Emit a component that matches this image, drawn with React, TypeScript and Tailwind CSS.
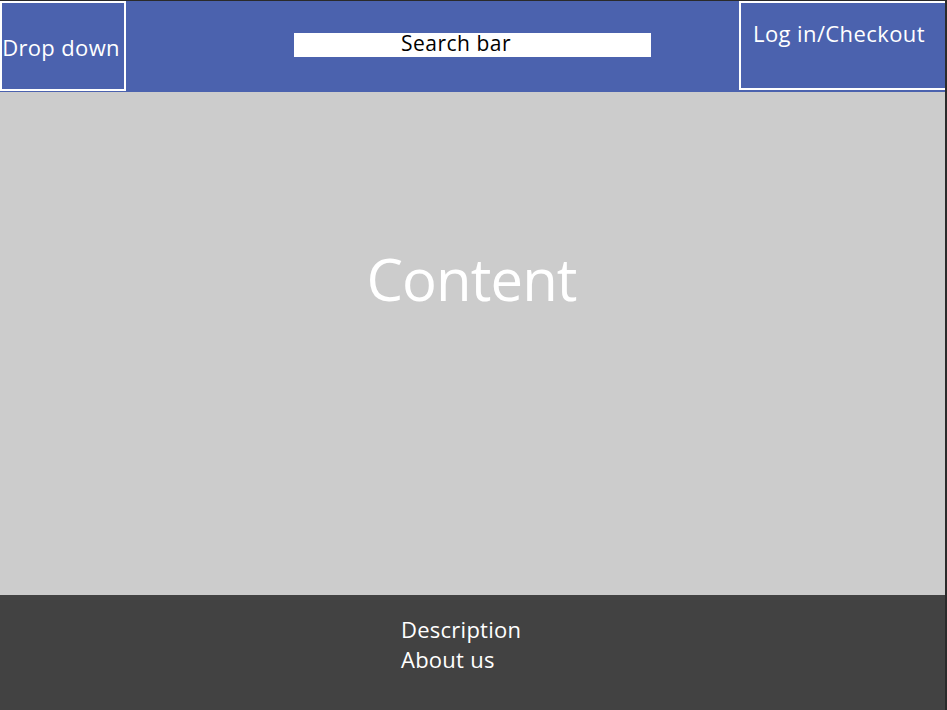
import React from "react";

export default function App() {
  return (
    <div
      className="w-[947px] h-[710px] overflow-hidden flex bg-[#2a2a2a]"
      style={{ fontFamily: '"Open Sans", "Noto Sans", sans-serif' }}
    >
      <div className="w-[945px] h-[710px] flex flex-col">
        <header className="h-[92px] bg-[#4b62ae] border-t border-[#2a2a2a] flex items-stretch">
          <div className="w-[126px] h-[90px] border-2 border-white flex items-center justify-center pt-[2px] pr-[4px] text-white text-[22px] tracking-[0.35px]">
            Drop down
          </div>
          <div className="flex-1 flex items-start pl-[168px] pt-[32px]">
            <div className="w-[357px] h-[24px] bg-white flex items-center pl-[107px] pb-[3px] text-black text-[21px] leading-none tracking-[0.5px]">
              Search bar
            </div>
          </div>
          <div className="w-[206px] h-[89px] border-2 border-r-0 border-white flex justify-center pt-[15px] pr-[8px] text-white text-[22px] leading-[30px] tracking-[0.4px]">
            Log in/Checkout
          </div>
        </header>
        <main className="flex-1 bg-[#cccccc] flex justify-center pt-[147px] pr-[2px]">
          <div className="text-white text-[58px] leading-[80px] tracking-[-0.9px]">Content</div>
        </main>
        <footer className="h-[115px] bg-[#424242] pl-[401px] pt-[19px] text-white text-[22px] leading-[30px] tracking-[0.25px]">
          <div>Description</div>
          <div>About us</div>
        </footer>
      </div>
    </div>
  );
}
